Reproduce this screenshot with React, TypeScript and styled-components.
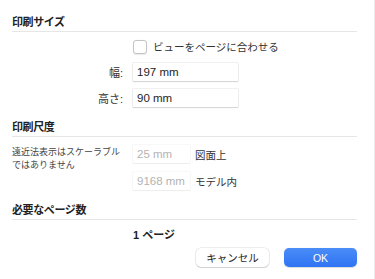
import React from "react";
import styled, { createGlobalStyle } from "styled-components";

const Global = createGlobalStyle`
  html, body { margin: 0; padding: 0; background: #ffffff; }
  body { font-family: "Liberation Sans", "Noto Sans CJK JP", sans-serif; color: #262626; }
`;

const Dialog = styled.div`
  width: 375px;
  height: 279px;
  box-sizing: border-box;
  padding: 15px 17px 0 12px;
  background: #ffffff;
  display: flex;
  flex-direction: column;
  border-right: 1px solid #ececec;
`;

const Heading = styled.div<{ $top?: number }>`
  margin-top: ${(p) => p.$top ?? 0}px;
  font-size: 11px;
  line-height: 14px;
  font-weight: bold;
  letter-spacing: -0.4px;
  color: #222;
  padding-bottom: 2px;
  border-bottom: 1px solid #e6e6e6;
`;

const FormGrid = styled.div<{ $top: number; $gap: number }>`
  margin-top: ${(p) => p.$top}px;
  display: grid;
  grid-template-columns: 111px auto;
  column-gap: 10px;
  row-gap: ${(p) => p.$gap}px;
  align-items: center;
`;

const Label = styled.div`
  font-size: 11px;
  color: #333;
  text-align: right;
`;

const Note = styled.div`
  grid-row: 1 / span 2;
  grid-column: 1;
  align-self: start;
  margin-top: 1px;
  font-size: 9px;
  line-height: 13px;
  color: #444;
`;

const CheckRow = styled.label`
  grid-column: 2;
  display: flex;
  align-items: center;
  gap: 6px;
  font-size: 10.5px;
  color: #333;
  height: 13px;
`;

const Box = styled.span`
  width: 12px;
  height: 12px;
  border-radius: 3px;
  border: 0.5px solid #c4c4c4;
  box-shadow: 0 0.5px 1px rgba(0, 0, 0, 0.08);
  background: #fff;
`;

const Field = styled.div<{ $w: number; $disabled?: boolean }>`
  grid-column: 2;
  width: ${(p) => p.$w}px;
  height: 18px;
  box-sizing: border-box;
  padding-left: 4px;
  display: flex;
  align-items: center;
  font-size: 11.5px;
  color: ${(p) => (p.$disabled ? "#b3b3b3" : "#1e1e1e")};
  background: #fff;
  box-shadow: ${(p) =>
    p.$disabled
      ? "0 0 0 0.5px rgba(0,0,0,0.06), 0 1px 1px rgba(0,0,0,0.04)"
      : "0 0 0 0.5px rgba(0,0,0,0.12), 0 1px 1px rgba(0,0,0,0.1)"};
`;

const UnitRow = styled.div`
  grid-column: 2;
  display: flex;
  align-items: center;
  gap: 5px;
`;

const Unit = styled.span`
  font-size: 10.5px;
  color: #333;
`;

const Pages = styled.div`
  margin-top: 8px;
  padding-left: 121px;
  font-size: 11px;
  line-height: 14px;
  font-weight: bold;
  color: #222;
`;

const Buttons = styled.div`
  margin-top: 6px;
  display: flex;
  justify-content: flex-end;
  gap: 15px;
`;

const Button = styled.button<{ $primary?: boolean }>`
  width: 73px;
  height: 19px;
  border-radius: 5px;
  border: none;
  font-family: inherit;
  font-size: 10.5px;
  padding: 0;
  color: ${(p) => (p.$primary ? "#fff" : "#262626")};
  background: ${(p) =>
    p.$primary ? "linear-gradient(#4a8cf7, #2f74f3)" : "#fff"};
  box-shadow: ${(p) =>
    p.$primary
      ? "0 0.5px 1px rgba(0,0,0,0.15)"
      : "0 0 0 0.5px rgba(0,0,0,0.14), 0 1px 1px rgba(0,0,0,0.12)"};
`;

export default function App() {
  return (
    <>
      <Global />
      <Dialog>
        <Heading>印刷サイズ</Heading>
        <FormGrid $top={8} $gap={10}>
          <CheckRow>
            <Box />
            ビューをページに合わせる
          </CheckRow>
          <Label>幅:</Label>
          <Field $w={105}>197 mm</Field>
        </FormGrid>
        <FormGrid $top={8} $gap={8}>
          <Label>高さ:</Label>
          <Field $w={105}>90 mm</Field>
        </FormGrid>
        <Heading $top={13}>印刷尺度</Heading>
        <FormGrid $top={8} $gap={9}>
          <Note>
            遠近法表示はスケーラブル
            <br />
            ではありません
          </Note>
          <UnitRow>
            <Field $w={57} $disabled>25 mm</Field>
            <Unit>図面上</Unit>
          </UnitRow>
          <UnitRow>
            <Field $w={57} $disabled>9168 mm</Field>
            <Unit>モデル内</Unit>
          </UnitRow>
        </FormGrid>
        <Heading $top={13}>必要なページ数</Heading>
        <Pages>1 ページ</Pages>
        <Buttons>
          <Button>キャンセル</Button>
          <Button $primary>OK</Button>
        </Buttons>
      </Dialog>
    </>
  );
}
